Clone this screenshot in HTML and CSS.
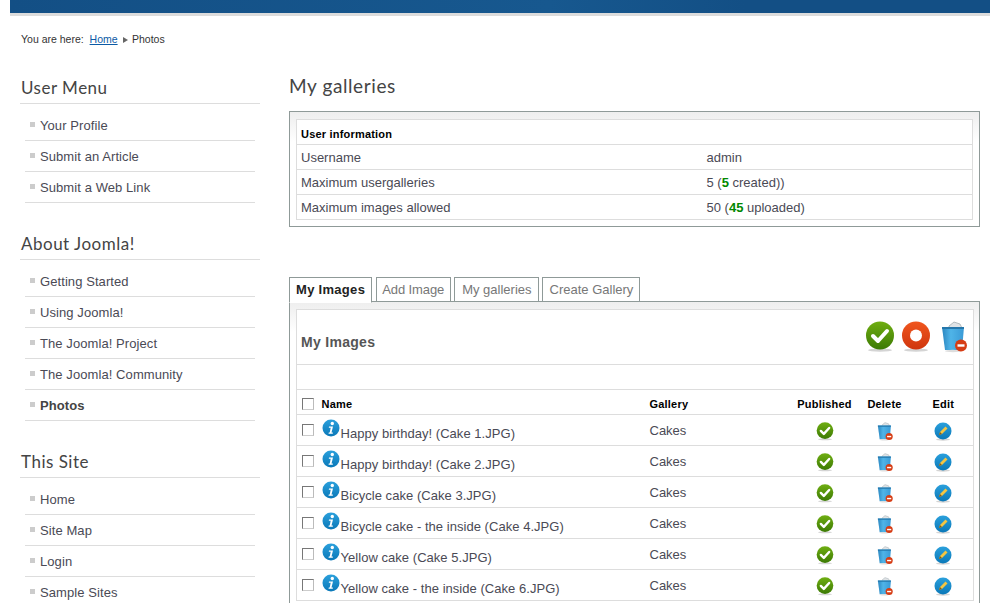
FILE: index.html
```html
<!DOCTYPE html>
<html lang="en">
<head>
<meta charset="utf-8">
<title>My galleries</title>
<link rel="stylesheet" href="styles.css">
</head>
<body>
<svg class="defs" width="0" height="0" aria-hidden="true">
  <defs>
    <linearGradient id="gGreen" x1="0" y1="0" x2="0" y2="1"><stop offset="0" stop-color="#6fae12"/><stop offset="1" stop-color="#3c7a04"/></linearGradient>
    <linearGradient id="gRed" x1="0" y1="0" x2="0" y2="1"><stop offset="0" stop-color="#f0561e"/><stop offset="1" stop-color="#cf360e"/></linearGradient>
    <linearGradient id="gBlue" x1="0" y1="0" x2="0" y2="1"><stop offset="0" stop-color="#2ba0dc"/><stop offset="1" stop-color="#0a78b8"/></linearGradient>
    <linearGradient id="gBin" x1="0" y1="0" x2="1" y2="0"><stop offset="0" stop-color="#2a86c0"/><stop offset=".4" stop-color="#4fb4e8"/><stop offset="1" stop-color="#3a9ad6"/></linearGradient>
    <symbol id="iOk" viewBox="0 0 30 32">
      <ellipse cx="15" cy="29.2" rx="12" ry="1.600" fill="#d4d4d4"/>
      <circle cx="15" cy="14.5" r="14" fill="url(#gGreen)"/>
      <path d="M8 15l5 5 9-10" fill="none" stroke="#fff" stroke-width="4" stroke-linecap="round" stroke-linejoin="round"/>
    </symbol>
    <symbol id="iStop" viewBox="0 0 30 32">
      <ellipse cx="15" cy="29.2" rx="12" ry="1.600" fill="#d4d4d4"/>
      <circle cx="15" cy="14.5" r="14" fill="url(#gRed)"/>
      <circle cx="15" cy="14.5" r="6" fill="#fff"/>
    </symbol>
    <symbol id="iBin" viewBox="0 0 28 32">
      <path d="M9 5l5-4 6 2 2 4H9z" fill="#dfe3e6" stroke="#9aa3a8" stroke-width=".7"/>
      <path d="M2 6h22l-2 23H5z" fill="url(#gBin)"/>
      <path d="M2 6h22v2H2z" fill="#2577ab"/>
      <ellipse cx="13" cy="30" rx="8" ry="1.2" fill="#ddd"/>
      <circle cx="21" cy="24.5" r="6" fill="#d63c14"/>
      <rect x="17.5" y="23.3" width="7" height="2.4" fill="#fff"/>
    </symbol>
    <symbol id="iEdit" viewBox="0 0 18 19">
      <ellipse cx="9" cy="17.5" rx="7" ry="1.2" fill="#d4d4d4"/>
      <circle cx="9" cy="9" r="8.5" fill="url(#gBlue)"/>
      <path d="M5 13l1-3 5.500-5.500 2 2L8 12z" fill="#f4c542"/>
      <path d="M5 13l1-3 2 2z" fill="#7a5a20"/>
    </symbol>
    <symbol id="iInfo" viewBox="0 0 18 18">
      <circle cx="9" cy="9" r="8.500" fill="url(#gBlue)"/>
      <circle cx="10.300" cy="4.500" r="1.700" fill="#fff"/>
      <path d="M7 7.500h4l-1.500 6h1.300v1.300H6.500l.3-1.300h.9l1-4.700H6.800z" fill="#fff"/>
    </symbol>
  </defs>
</svg>
<div class="site">
  <div class="topbar"></div>
  <div class="breadcrumb">You are here: <a href="#">Home</a> <span class="crumb-arrow"></span> Photos</div>
  <div class="columns">
    <aside class="sidebar">
      <section class="module">
        <h3>User Menu</h3>
        <ul>
          <li><a href="#">Your Profile</a></li>
          <li><a href="#">Submit an Article</a></li>
          <li><a href="#">Submit a Web Link</a></li>
        </ul>
      </section>
      <section class="module">
        <h3>About Joomla!</h3>
        <ul>
          <li><a href="#">Getting Started</a></li>
          <li><a href="#">Using Joomla!</a></li>
          <li><a href="#">The Joomla! Project</a></li>
          <li><a href="#">The Joomla! Community</a></li>
          <li class="current"><a href="#">Photos</a></li>
        </ul>
      </section>
      <section class="module">
        <h3>This Site</h3>
        <ul>
          <li><a href="#">Home</a></li>
          <li><a href="#">Site Map</a></li>
          <li><a href="#">Login</a></li>
          <li><a href="#">Sample Sites</a></li>
        </ul>
      </section>
    </aside>
    <main class="content">
      <h2>My galleries</h2>
      <div class="panel info-panel">
        <table class="info">
          <colgroup><col class="c-label"><col></colgroup>
          <tr><th colspan="2">User information</th></tr>
          <tr><td class="label">Username</td><td>admin</td></tr>
          <tr><td class="label">Maximum usergalleries</td><td>5 (<b class="count">5</b> created))</td></tr>
          <tr><td class="label">Maximum images allowed</td><td>50 (<b class="count">45</b> uploaded)</td></tr>
        </table>
      </div>
      <nav class="tabs">
        <a class="tab active" href="#">My Images</a>
        <a class="tab" href="#">Add Image</a>
        <a class="tab" href="#">My galleries</a>
        <a class="tab" href="#">Create Gallery</a>
      </nav>
      <div class="panel images-panel">
        <table class="images">
          <colgroup><col class="c-check"><col class="c-name"><col class="c-gallery"><col class="c-pub"><col class="c-del"><col class="c-edit"></colgroup>
          <tr class="title-row"><td colspan="6">
            <div class="title-bar">
              <span class="title">My Images</span>
              <span class="tools">
                <svg class="tool-ok"><use href="#iOk"/></svg>
                <svg class="tool-stop"><use href="#iStop"/></svg>
                <svg class="tool-bin"><use href="#iBin"/></svg>
              </span>
            </div>
          </td></tr>
          <tr class="blank-row"><td colspan="6"></td></tr>
          <tr class="head-row">
            <th><input type="checkbox" class="check"></th>
            <th>Name</th>
            <th>Gallery</th>
            <th class="mid">Published</th>
            <th class="mid">Delete</th>
            <th class="mid">Edit</th>
          </tr>
          <tr class="row">
            <td class="cell-check"><input type="checkbox" class="check"></td>
            <td class="name"><svg class="info-icon"><use href="#iInfo"/></svg>Happy birthday! (Cake 1.JPG)</td>
            <td>Cakes</td>
            <td class="mid"><svg class="act"><use href="#iOk"/></svg></td>
            <td class="mid"><svg class="act"><use href="#iBin"/></svg></td>
            <td class="mid"><svg class="act"><use href="#iEdit"/></svg></td>
          </tr>
          <tr class="row">
            <td class="cell-check"><input type="checkbox" class="check"></td>
            <td class="name"><svg class="info-icon"><use href="#iInfo"/></svg>Happy birthday! (Cake 2.JPG)</td>
            <td>Cakes</td>
            <td class="mid"><svg class="act"><use href="#iOk"/></svg></td>
            <td class="mid"><svg class="act"><use href="#iBin"/></svg></td>
            <td class="mid"><svg class="act"><use href="#iEdit"/></svg></td>
          </tr>
          <tr class="row">
            <td class="cell-check"><input type="checkbox" class="check"></td>
            <td class="name"><svg class="info-icon"><use href="#iInfo"/></svg>Bicycle cake (Cake 3.JPG)</td>
            <td>Cakes</td>
            <td class="mid"><svg class="act"><use href="#iOk"/></svg></td>
            <td class="mid"><svg class="act"><use href="#iBin"/></svg></td>
            <td class="mid"><svg class="act"><use href="#iEdit"/></svg></td>
          </tr>
          <tr class="row">
            <td class="cell-check"><input type="checkbox" class="check"></td>
            <td class="name"><svg class="info-icon"><use href="#iInfo"/></svg>Bicycle cake - the inside (Cake 4.JPG)</td>
            <td>Cakes</td>
            <td class="mid"><svg class="act"><use href="#iOk"/></svg></td>
            <td class="mid"><svg class="act"><use href="#iBin"/></svg></td>
            <td class="mid"><svg class="act"><use href="#iEdit"/></svg></td>
          </tr>
          <tr class="row">
            <td class="cell-check"><input type="checkbox" class="check"></td>
            <td class="name"><svg class="info-icon"><use href="#iInfo"/></svg>Yellow cake (Cake 5.JPG)</td>
            <td>Cakes</td>
            <td class="mid"><svg class="act"><use href="#iOk"/></svg></td>
            <td class="mid"><svg class="act"><use href="#iBin"/></svg></td>
            <td class="mid"><svg class="act"><use href="#iEdit"/></svg></td>
          </tr>
          <tr class="row">
            <td class="cell-check"><input type="checkbox" class="check"></td>
            <td class="name"><svg class="info-icon"><use href="#iInfo"/></svg>Yellow cake - the inside (Cake 6.JPG)</td>
            <td>Cakes</td>
            <td class="mid"><svg class="act"><use href="#iOk"/></svg></td>
            <td class="mid"><svg class="act"><use href="#iBin"/></svg></td>
            <td class="mid"><svg class="act"><use href="#iEdit"/></svg></td>
          </tr>
        </table>
      </div>
    </main>
  </div>
</div>
</body>
</html>
```
FILE: styles.css
```css
html, body { margin: 0; padding: 0; height: 603px; overflow: hidden; background: #fff; }
body { font-family: "Liberation Sans", Arial, sans-serif; font-size: 12px; color: #444; }
.defs { position: absolute; }
.site { width: 980px; margin: 0 10px; }
.topbar { height: 13px; background: linear-gradient(90deg, #134f85, #17588f 55%, #134f85 75%); border-bottom: 3px solid #dcdcdc; }
.breadcrumb { height: 51px; box-sizing: border-box; padding: 17px 0 0 11px; font-size: 10.500px; line-height: 13px; color: #333; }
.breadcrumb a { margin-left: 3px; color: #0b5aa5; }
.crumb-arrow { display: inline-block; width: 0; height: 0; margin: 0 1.500px 0 2px; border-left: 5px solid #666; border-top: 3px solid transparent; border-bottom: 3px solid transparent; }
.columns { display: flex; align-items: flex-start; padding-left: 10px; }
.sidebar { width: 240px; flex: none; }
.module { margin-bottom: 20px; }
.module h3 { margin: 0; padding: 9px 0 3px 1px; height: 24px; line-height: 24px; font-family: "Lato", sans-serif; font-size: 17px; font-weight: 400; letter-spacing: .5px; color: #444; border-bottom: 1px solid #ddd; }
.module ul { list-style: none; margin: 6px 5px 0; padding: 0; }
.module li { display: flex; align-items: center; gap: 5px; height: 30px; padding-left: 5px; border-bottom: 1px solid #ddd; font-size: 13px; letter-spacing: .08px; }
.module li::before { content: ""; width: 5px; height: 5px; margin-bottom: 2px; background: #ccc; }
.module li a { color: #4a4a55; text-decoration: none; }
.module li.current a { font-weight: 700; color: #444; }
.content { width: 691px; margin-left: 29px; flex: none; }
.content h2 { margin: 0; height: 44px; padding: 6px 0 0; box-sizing: border-box; line-height: 26px; font-family: "Lato", sans-serif; font-size: 19px; font-weight: 400; letter-spacing: .6px; color: #444; }
.panel { border: 1px solid #8f9a98; padding: 7px 6px 6px 6px; background: linear-gradient(#eee, #fff 30px); }
.info-panel { margin-bottom: 50px; }
table { border-collapse: collapse; width: 100%; background: #fff; table-layout: fixed; }
th, td { border: 1px solid #ddd; }
.info { font-size: 13px; color: #4a4a55; }
.info th { height: 21px; padding: 3px 4px 0; text-align: left; font-size: 11px; letter-spacing: .2px; color: #000; }
.info td { height: 23px; padding: 1px 4px 0; }
.c-label { width: 406px; }
.info .label { border-right: 0; }
.info td:last-child { border-left: 0; }
.count { color: #080; }
.tabs { display: flex; gap: 3px; height: 25px; position: relative; z-index: 1; margin-bottom: -1px; }
.tab { display: block; box-sizing: border-box; height: 25px; padding: 0 6px; line-height: 24px; border: 1px solid #8f9a98; font-size: 13px; color: #777; text-decoration: none; background: #fff; }
.tab.active { font-weight: 700; color: #222; border-bottom-color: #fff; height: 26px; margin-right: 1px; letter-spacing: .3px; background: #fff; }
.tab:nth-child(2) { padding: 0 6px 0 5px; letter-spacing: -.1px; }
.tab:nth-child(3), .tab:nth-child(4) { padding: 0 6px 0 7px; }
.images { font-size: 13px; color: #4a4a55; }
.images td, .images th { border-left: 0; border-right: 0; }
.images tr > :first-child { border-left: 1px solid #ddd; }
.images tr > :last-child { border-right: 1px solid #ddd; }
.c-check { width: 21px; }
.c-name { width: 328px; }
.c-gallery { width: 148px; }
.c-pub { width: 62px; }
.c-del { width: 58px; }
.c-edit { width: 60px; }
.title-row td { height: 54px; padding: 0 5px 0 4px; }
.title-bar { display: flex; align-items: center; justify-content: space-between; }
.title { padding-top: 10px; font-size: 14px; font-weight: 700; letter-spacing: .3px; color: #555; }
.tools { display: flex; }
.tool-ok, .tool-stop { width: 30px; height: 32px; }
.tool-ok { margin-right: 6px; }
.tool-stop { margin-right: 9px; }
.tool-bin { width: 28px; height: 32px; }
.blank-row td { height: 24px; padding: 0; }
.head-row th { height: 20px; padding: 4px 4px 0; text-align: left; font-size: 11px; letter-spacing: .2px; color: #000; }
.images .mid { text-align: center; padding: 0; }
.images .head-row .mid { padding: 4px 0 0; text-align: center; }
.images .row .mid { height: 28px; padding-top: 2px; }
.check { appearance: none; display: block; width: 12px; height: 12px; margin: 0 0 0 1px; background: #fff; border: 1px solid #777; border-right-color: #bbb; border-bottom-color: #ccc; box-sizing: border-box; }
.row td { height: 30px; padding: 0 4px; }
.row .cell-check { height: 21px; vertical-align: top; padding-top: 9px; }
.row .name { height: 24px; padding-top: 6px; white-space: nowrap; letter-spacing: .04px; }
.info-icon { width: 18px; height: 18px; margin-right: 1px; vertical-align: -4px; position: relative; top: -5px; }
.act { display: inline-block; width: 18px; height: 19px; vertical-align: middle; }
```
